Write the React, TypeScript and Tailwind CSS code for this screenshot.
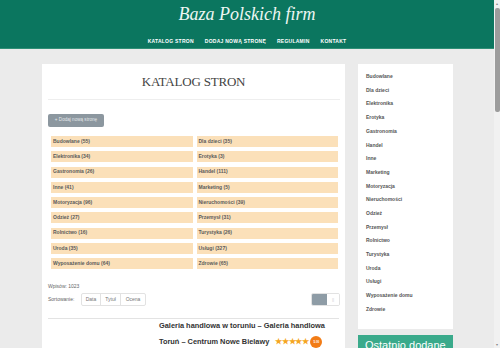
const categories = [
  ['Budowlane (55)', 'Dla dzieci (35)'],
  ['Elektronika (34)', 'Erotyka (3)'],
  ['Gastronomia (26)', 'Handel (111)'],
  ['Inne (41)', 'Marketing (5)'],
  ['Motoryzacja (96)', 'Nieruchomości (39)'],
  ['Odzież (27)', 'Przemysł (31)'],
  ['Rolnictwo (16)', 'Turystyka (26)'],
  ['Uroda (35)', 'Usługi (327)'],
  ['Wyposażenie domu (64)', 'Zdrowie (65)'],
];

const sideLinks = [
  'Budowlane', 'Dla dzieci', 'Elektronika', 'Erotyka', 'Gastronomia', 'Handel', 'Inne', 'Marketing',
  'Motoryzacja', 'Nieruchomości', 'Odzież', 'Przemysł', 'Rolnictwo', 'Turystyka', 'Uroda', 'Usługi',
  'Wyposażenie domu', 'Zdrowie',
];

const navItems = ['KATALOG STRON', 'DODAJ NOWĄ STRONĘ', 'REGULAMIN', 'KONTAKT'];

function Header() {
  return (
    <header className="h-[49px] shrink-0 bg-[#0b765f] border-b border-[#2f8f76] flex flex-col items-center">
      <h1 className="pt-[4px] h-[37px] text-[18px] leading-[20px] italic text-[#eef7f3] font-['Liberation_Serif',serif]">
        Baza Polskich firm
      </h1>
      <nav className="flex gap-[11px] text-[5px] leading-[8px] font-bold tracking-[0.25px] text-white">
        {navItems.map(item => (
          <span key={item}>{item}</span>
        ))}
      </nav>
    </header>
  );
}

function Stars() {
  return (
    <span className="flex items-center text-[#f5a623] text-[8px] leading-[8px] tracking-[-0.4px] ml-[6px]">
      ★★★★★
    </span>
  );
}

function MainCard() {
  return (
    <main className="w-[303px] shrink-0 bg-white pt-[10px] pl-[6px] pr-[4px] self-start h-[300px]">
      <h2 className="h-[16px] leading-[16px] text-center text-[13px] text-[#444] tracking-[-0.2px] font-['Liberation_Serif',serif] pr-[2px]">
        KATALOG STRON
      </h2>
      <div className="mt-[9px] border-t border-[#eeeeee] mr-[1px]" />

      <button className="mt-[14px] h-[13px] w-[56px] rounded-[2px] bg-[#8c979f] text-[4.6px] text-[#e4e8eb] flex items-center justify-center">
        + Dodaj nową stronę
      </button>

      <div className="mt-[9px] px-[3px] grid grid-cols-2 gap-x-[4px] gap-y-[4.25px] pr-[3px]">
        {categories.flat().map(cat => (
          <div key={cat} className="h-[11px] bg-[#fbe0b9] pl-[2px] flex items-center text-[5px] font-bold text-[#5a5a5a]">
            {cat}
          </div>
        ))}
      </div>

      <div className="mt-[13px] h-[8px] leading-[8px] text-[5px] text-[#666]">Wpisów: 1023</div>

      <div className="mt-[3px] flex items-center h-[13px]">
        <span className="text-[5px] text-[#666] w-[33px]">Sortowanie:</span>
        <div className="flex h-[13px] border border-[#e2e2e2] rounded-[2px] text-[5px] text-[#777]">
          <span className="w-[19px] flex items-center justify-center border-r border-[#e2e2e2]">Data</span>
          <span className="w-[20px] flex items-center justify-center border-r border-[#e2e2e2]">Tytuł</span>
          <span className="w-[24px] flex items-center justify-center">Ocena</span>
        </div>
        <div className="ml-auto mr-[1px] flex h-[13px] rounded-[2px] border border-[#e2e2e2] overflow-hidden">
          <span className="w-[15px] bg-[#8e9ca6]" />
          <span className="w-[12px] bg-white flex items-center justify-center text-[4px] text-[#ccc]">||</span>
        </div>
      </div>

      <div className="mt-[12px] border-t border-[#e3e3e3] mr-[2px]" />

      <div className="flex pt-[1px]">
        <div className="w-[111px] shrink-0" />
        <div className="text-[7.4px] font-bold text-[#333]">
          <div className="h-[12px] leading-[12px]">Galeria handlowa w toruniu – Galeria handlowa</div>
          <div className="mt-[3px] h-[14px] flex items-center">
            <span>Toruń – Centrum Nowe Bielawy</span>
            <Stars />
            <span className="ml-[2px] w-[12px] h-[12px] rounded-full bg-[#f27c16] flex items-center justify-center text-[3px] text-white">
              5.00
            </span>
          </div>
        </div>
      </div>
    </main>
  );
}

function Sidebar() {
  return (
    <aside className="w-[95px] shrink-0 flex flex-col gap-[6px]">
      <div className="bg-white pt-[6px] pb-[13px] pl-[8px]">
        {sideLinks.map(link => (
          <div key={link} className="h-[13.7px] flex items-center text-[5px] font-bold text-[#555]">
            {link}
          </div>
        ))}
      </div>
      <div className="bg-[#3aaa8b] h-[40px] pl-[7px] pt-[3px] text-[11px] leading-[14px] text-white">Ostatnio dodane</div>
    </aside>
  );
}

function Scrollbar() {
  return (
    <div className="w-[6px] shrink-0 bg-[#f1f1f1] flex flex-col items-center">
      <span className="mt-[1px] h-[5px] text-[4px] leading-[5px] text-[#888]">▴</span>
      <div className="mt-[2px] w-[5px] h-[104px] rounded-[2px] bg-[#9c9c9c]" />
      <span className="mt-auto mb-[1px] h-[5px] text-[4px] leading-[5px] text-[#888]">▾</span>
    </div>
  );
}

export default function App() {
  return (
    <div className="flex h-[348px] w-[500px] overflow-hidden bg-[#ebebeb] font-['Liberation_Sans',Arial,sans-serif]">
      <div className="w-[494px] shrink-0 flex flex-col">
        <Header />
        <div className="flex gap-[13px] px-[42px] pt-[15px]">
          <MainCard />
          <Sidebar />
        </div>
      </div>
      <Scrollbar />
    </div>
  );
}
